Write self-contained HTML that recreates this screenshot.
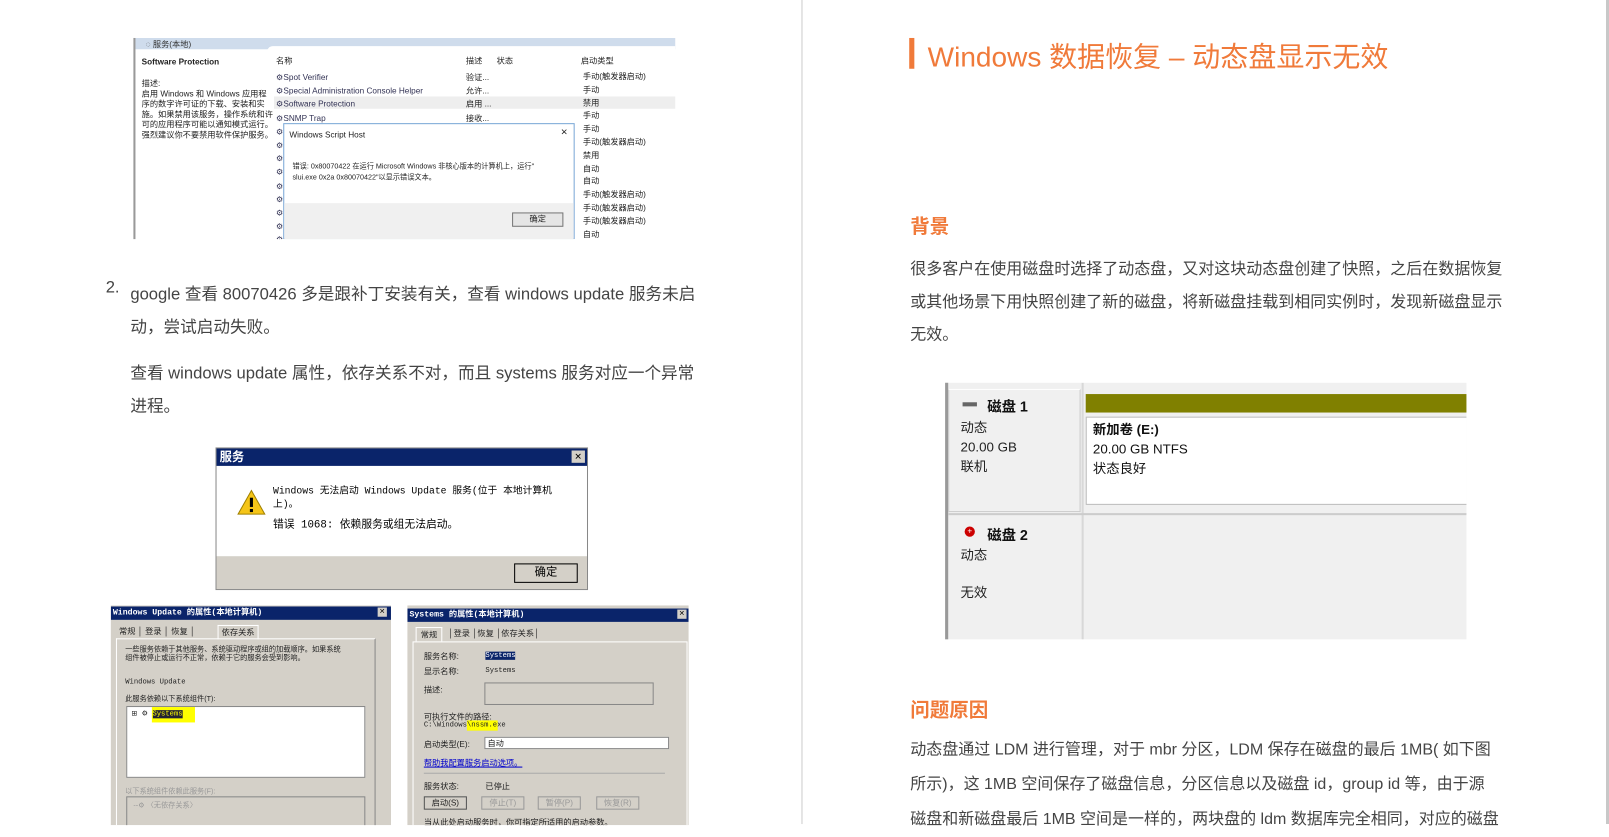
<!DOCTYPE html>
<html><head><meta charset="utf-8"><style>
*{margin:0;padding:0;box-sizing:border-box}
body{width:1609px;height:824px;background:#fff;position:relative;overflow:hidden;font-family:"Liberation Sans","Noto Sans CJK SC",sans-serif;color:#333}
#w{position:absolute;left:0;top:0;width:1568px;height:803px;transform:scale(1.0262);transform-origin:0 0}
.a{position:absolute}
.t{font-size:15.6px;color:#444;white-space:nowrap}
.tl{font-size:16.2px}
.s{font-size:8px;color:#222;white-space:nowrap;font-family:"Liberation Sans","Noto Sans CJK SC",sans-serif}
.m{font-family:"Liberation Mono","Noto Sans CJK SC",monospace}
.h{color:#f07a3a;font-weight:bold;font-size:19px}
</style></head><body>
<div class="a" style="left:1606px;top:0;width:3px;height:824px;background:#c8c8c8"></div>
<div id="w">
<div class="a" style="left:781px;top:0;width:1px;height:803px;background:#ccc"></div>

<!-- screenshot 1 -->
<div class="a" style="left:130px;top:37px;width:528px;height:196px;background:#fff;border-left:2px solid #999;overflow:hidden">
 <div class="a" style="left:0;top:0;width:528px;height:11px;background:#cfdcec"></div>
 <div class="a s" style="left:10px;top:1px;color:#333">◌ 服务(本地)</div>
 <div class="a" style="left:128px;top:8px;width:400px;height:6px;background:#fff;border-radius:6px 0 0 0"></div>
 <div class="a s" style="left:6px;top:19px;font-weight:bold">Software Protection</div>
 <div class="a s" style="left:6px;top:40px;line-height:10px">描述:<br>启用 Windows 和 Windows 应用程<br>序的数字许可证的下载、安装和实<br>施。如果禁用该服务，操作系统和许<br>可的应用程序可能以通知模式运行。<br>强烈建议你不要禁用软件保护服务。</div>
 <div class="a s" style="left:137px;top:17px">名称</div>
 <div class="a s" style="left:322px;top:17px">描述</div><div class="a s" style="left:352px;top:17px">状态</div><div class="a s" style="left:434px;top:17px">启动类型</div>
 <div class="a" style="left:135px;top:57px;width:393px;height:12px;background:#eee"></div>
 <div class="a s" style="left:137px;top:32px;line-height:13.2px;color:#335">⚙Spot Verifier<br>⚙Special Administration Console Helper<br>⚙Software Protection<br>⚙SNMP Trap<br>⚙<br>⚙<br>⚙<br>⚙<br>⚙<br>⚙<br>⚙<br>⚙<br>⚙<br>⚙</div>
 <div class="a s" style="left:322px;top:32px;line-height:13.2px">验证...<br>允许...<br>启用 ...<br>接收...</div>
 <div class="a s" style="left:436px;top:32px;line-height:12.8px">手动(触发器启动)<br>手动<br>禁用<br>手动<br>手动<br>手动(触发器启动)<br>禁用<br>自动<br>自动<br>手动(触发器启动)<br>手动(触发器启动)<br>手动(触发器启动)<br>自动</div>
 <div class="a" style="left:144px;top:83px;width:284px;height:113px;background:#fff;border:1px solid #7aa7d6">
  <div class="a s" style="left:5px;top:6px">Windows Script Host</div>
  <div class="a s" style="right:6px;top:2px;font-size:11px">×</div>
  <div class="a s" style="left:8px;top:36px;line-height:11px;font-size:7px">错误: 0x80070422 在运行 Microsoft Windows 非核心版本的计算机上，运行"<br>slui.exe 0x2a 0x80070422"以显示错误文本。</div>
  <div class="a" style="left:0;top:77px;width:282px;height:36px;background:#f0f0f0"></div>
  <div class="a s" style="left:222px;top:86px;width:50px;height:14px;border:1px solid #777;background:#e5e5e5;text-align:center;line-height:12px">确定</div>
 </div>
</div>

<div class="a t tl" style="left:103px;top:271px">2.</div>
<div class="a t tl" style="left:127px;top:271px;line-height:32px">google 查看 80070426 多是跟补丁安装有关，查看 windows update 服务未启<br>动，尝试启动失败。</div>
<div class="a t tl" style="left:127px;top:348px;line-height:32px">查看 windows update 属性，依存关系不对，而且 systems 服务对应一个异常<br>进程。</div>

<!-- service dialog -->
<div class="a" style="left:210px;top:436px;width:363px;height:139px;background:#fff;border:1px solid #888">
 <div class="a" style="left:0;top:0;width:361px;height:17px;background:#0a246a;color:#fff;font-size:12px;font-weight:bold;padding-left:3px;line-height:17px">服务</div>
 <div class="a" style="right:2px;top:2px;width:13px;height:12px;background:#d4d0c8;font-size:9px;text-align:center;line-height:12px;color:#000">✕</div>
 <svg class="a" style="left:20px;top:40px" width="28" height="25"><polygon points="14,1 27,24 1,24" fill="#f5c518" stroke="#a08000"/><rect x="12.5" y="8" width="3" height="9" fill="#000"/><rect x="12.5" y="19" width="3" height="3" fill="#000"/></svg>
 <div class="a m" style="left:55px;top:35px;font-size:9.5px;color:#000;line-height:13px;white-space:nowrap">Windows 无法启动 Windows Update 服务(位于 本地计算机<br>上)。</div>
 <div class="a m" style="left:55px;top:66px;font-size:10.5px;color:#000;white-space:nowrap">错误 1068: 依赖服务或组无法启动。</div>
 <div class="a" style="left:0;top:105px;width:361px;height:32px;background:#d4d0c8"></div>
 <div class="a" style="left:290px;top:112px;width:62px;height:19px;border:1px solid #000;background:#d4d0c8;font-size:11px;text-align:center;line-height:17px;color:#000">确定</div>
</div>

<!-- bottom left dialog -->
<div class="a" style="left:108px;top:590px;width:273px;height:214px;background:#d4d0c8;overflow:hidden">
 <div class="a m" style="left:0;top:1px;width:273px;height:13px;background:#0a246a;color:#fff;font-size:8px;font-weight:bold;padding-left:2px;line-height:13px">Windows Update 的属性(本地计算机)</div>
 <div class="a" style="right:4px;top:2px;width:9px;height:9px;background:#d4d0c8;font-size:7px;line-height:9px;text-align:center;color:#000">✕</div>
 <div class="a s" style="left:8px;top:20px">常规 │ 登录 │ 恢复 │</div>
 <div class="a s" style="left:104px;top:19px;border:1px solid #fff;border-bottom:none;padding:1px 3px">依存关系</div>
 <div class="a" style="left:5px;top:32px;width:253px;height:210px;border:1px solid #fff;border-right-color:#888"></div>
 <div class="a s" style="left:14px;top:40px;line-height:8px;font-size:7px">一些服务依赖于其他服务、系统驱动程序或组的加载顺序。如果系统<br>组件被停止或运行不正常，依赖于它的服务会受到影响。</div>
 <div class="a s m" style="left:14px;top:71px;font-size:7px">Windows Update</div>
 <div class="a s" style="left:14px;top:86px;font-size:7px">此服务依赖以下系统组件(T):</div>
 <div class="a" style="left:15px;top:98px;width:233px;height:70px;background:#fff;border:1px solid #888"></div>
 <div class="a" style="left:40px;top:99px;width:42px;height:15px;background:#ffff00"></div>
 <div class="a s m" style="left:20px;top:101px;font-size:7px">⊞ ⚙ <span style="background:#223;color:#ff0">Systems</span></div>
 <div class="a s" style="left:14px;top:176px;color:#999;font-size:7px">以下系统组件依赖此服务(F):</div>
 <div class="a" style="left:15px;top:186px;width:233px;height:50px;border:1px solid #888"></div>
 <div class="a s" style="left:22px;top:190px;color:#999;font-size:7px">--⚙ 〈无依存关系〉</div>
</div>

<!-- bottom right dialog -->
<div class="a" style="left:397px;top:590px;width:274px;height:214px;background:#d4d0c8;overflow:hidden">
 <div class="a m" style="left:0;top:3px;width:274px;height:13px;background:#0a246a;color:#fff;font-size:8px;font-weight:bold;padding-left:2px;line-height:13px">Systems 的属性(本地计算机)</div>
 <div class="a" style="right:2px;top:4px;width:9px;height:9px;background:#d4d0c8;font-size:7px;line-height:9px;text-align:center;color:#000">✕</div>
 <div class="a s" style="left:8px;top:21px;border:1px solid #fff;border-bottom:none;padding:1px 4px">常规</div>
 <div class="a s" style="left:40px;top:22px">│登录 │恢复 │依存关系│</div>
 <div class="a" style="left:5px;top:35px;width:268px;height:200px;border:1px solid #fff"></div>
 <div class="a s" style="left:16px;top:42px;line-height:15px">服务名称:<br>显示名称:</div>
 <div class="a s m" style="left:76px;top:42px;line-height:15px;font-size:7px"><span style="background:#0a246a;color:#fff">Systems</span><br>Systems</div>
 <div class="a s" style="left:16px;top:77px">描述:</div>
 <div class="a" style="left:75px;top:75px;width:165px;height:22px;border:1px solid #888;background:#d4d0c8"></div>
 <div class="a s" style="left:16px;top:103px">可执行文件的路径:</div>
 <div class="a" style="left:58px;top:112px;width:30px;height:10px;background:#ffff00"></div>
 <div class="a s m" style="left:16px;top:113px;font-size:7px">C:\Windows\nssm.exe</div>
 <div class="a s" style="left:16px;top:130px">启动类型(E):</div>
 <div class="a s" style="left:75px;top:128px;width:180px;height:12px;background:#fff;border:1px solid #888;padding-left:2px">自动</div>
 <div class="a s" style="left:16px;top:148px;color:#00c;text-decoration:underline">帮助我配置服务启动选项。</div>
 <div class="a" style="left:16px;top:163px;width:235px;height:1px;background:#aaa"></div>
 <div class="a s" style="left:16px;top:171px">服务状态:</div><div class="a s" style="left:76px;top:171px">已停止</div>
 <div class="a s" style="left:16px;top:186px;width:42px;height:13px;border:1px solid #555;text-align:center">启动(S)</div>
 <div class="a s" style="left:72px;top:186px;width:42px;height:13px;border:1px solid #999;text-align:center;color:#999">停止(T)</div>
 <div class="a s" style="left:127px;top:186px;width:42px;height:13px;border:1px solid #999;text-align:center;color:#999">暂停(P)</div>
 <div class="a s" style="left:184px;top:186px;width:42px;height:13px;border:1px solid #999;text-align:center;color:#999">恢复(R)</div>
 <div class="a s" style="left:16px;top:206px">当从此处启动服务时，你可指定所适用的启动参数。</div>
</div>

<!-- right page -->
<div class="a" style="left:886px;top:37px;width:5px;height:30px;background:#f07a3a"></div>
<div class="a" style="left:904px;top:33px;font-size:27.3px;color:#f07a3a;white-space:nowrap">Windows 数据恢复 – 动态盘显示无效</div>
<div class="a h" style="left:887px;top:206px">背景</div>
<div class="a t" style="left:887px;top:247px;line-height:32px">很多客户在使用磁盘时选择了动态盘，又对这块动态盘创建了快照，之后在数据恢复<br>或其他场景下用快照创建了新的磁盘，将新磁盘挂载到相同实例时，发现新磁盘显示<br>无效。</div>

<div class="a" style="left:921px;top:373px;width:508px;height:250px;background:#f0f0f0;border-left:3px solid #999;overflow:hidden">
 <div class="a" style="left:0;top:6px;width:129px;height:120px;border:1px solid #ccc;border-top-color:#fff"></div>
 <div class="a" style="left:130px;top:0;width:2px;height:250px;background:#d8d8d8"></div>
 <div class="a" style="left:0;top:127px;width:508px;height:2px;background:#ccc"></div>
 <div class="a" style="left:14px;top:19px;width:14px;height:4px;background:#666"></div>
 <div class="a" style="left:38px;top:13px;font-size:14px;font-weight:bold;color:#111">磁盘 1</div>
 <div class="a" style="left:12px;top:34px;font-size:13px;color:#222;line-height:19px">动态<br>20.00 GB<br>联机</div>
 <div class="a" style="left:134px;top:11px;width:374px;height:18px;background:#808000"></div>
 <div class="a" style="left:134px;top:33px;width:374px;height:86px;background:#fff;border:1px solid #bbb"></div>
 <div class="a" style="left:141px;top:36px;font-size:13px;color:#111;line-height:19px"><b>新加卷 (E:)</b><br>20.00 GB NTFS<br>状态良好</div>
 <div class="a" style="left:16px;top:140px;width:10px;height:10px;border-radius:50%;background:#c00;color:#fff;font-size:8px;line-height:10px;text-align:center">+</div>
 <div class="a" style="left:38px;top:138px;font-size:14px;font-weight:bold;color:#111">磁盘 2</div>
 <div class="a" style="left:12px;top:157px;font-size:13px;color:#222">动态</div>
 <div class="a" style="left:12px;top:194px;font-size:13px;color:#222">无效</div>
</div>

<div class="a h" style="left:887px;top:677px">问题原因</div>
<div class="a t" style="left:887px;top:714px;line-height:34px">动态盘通过 LDM 进行管理，对于 mbr 分区，LDM 保存在磁盘的最后 1MB( 如下图<br>所示)，这 1MB 空间保存了磁盘信息，分区信息以及磁盘 id，group id 等，由于源<br>磁盘和新磁盘最后 1MB 空间是一样的，两块盘的 ldm 数据库完全相同，对应的磁盘</div>
</div>
</body></html>
